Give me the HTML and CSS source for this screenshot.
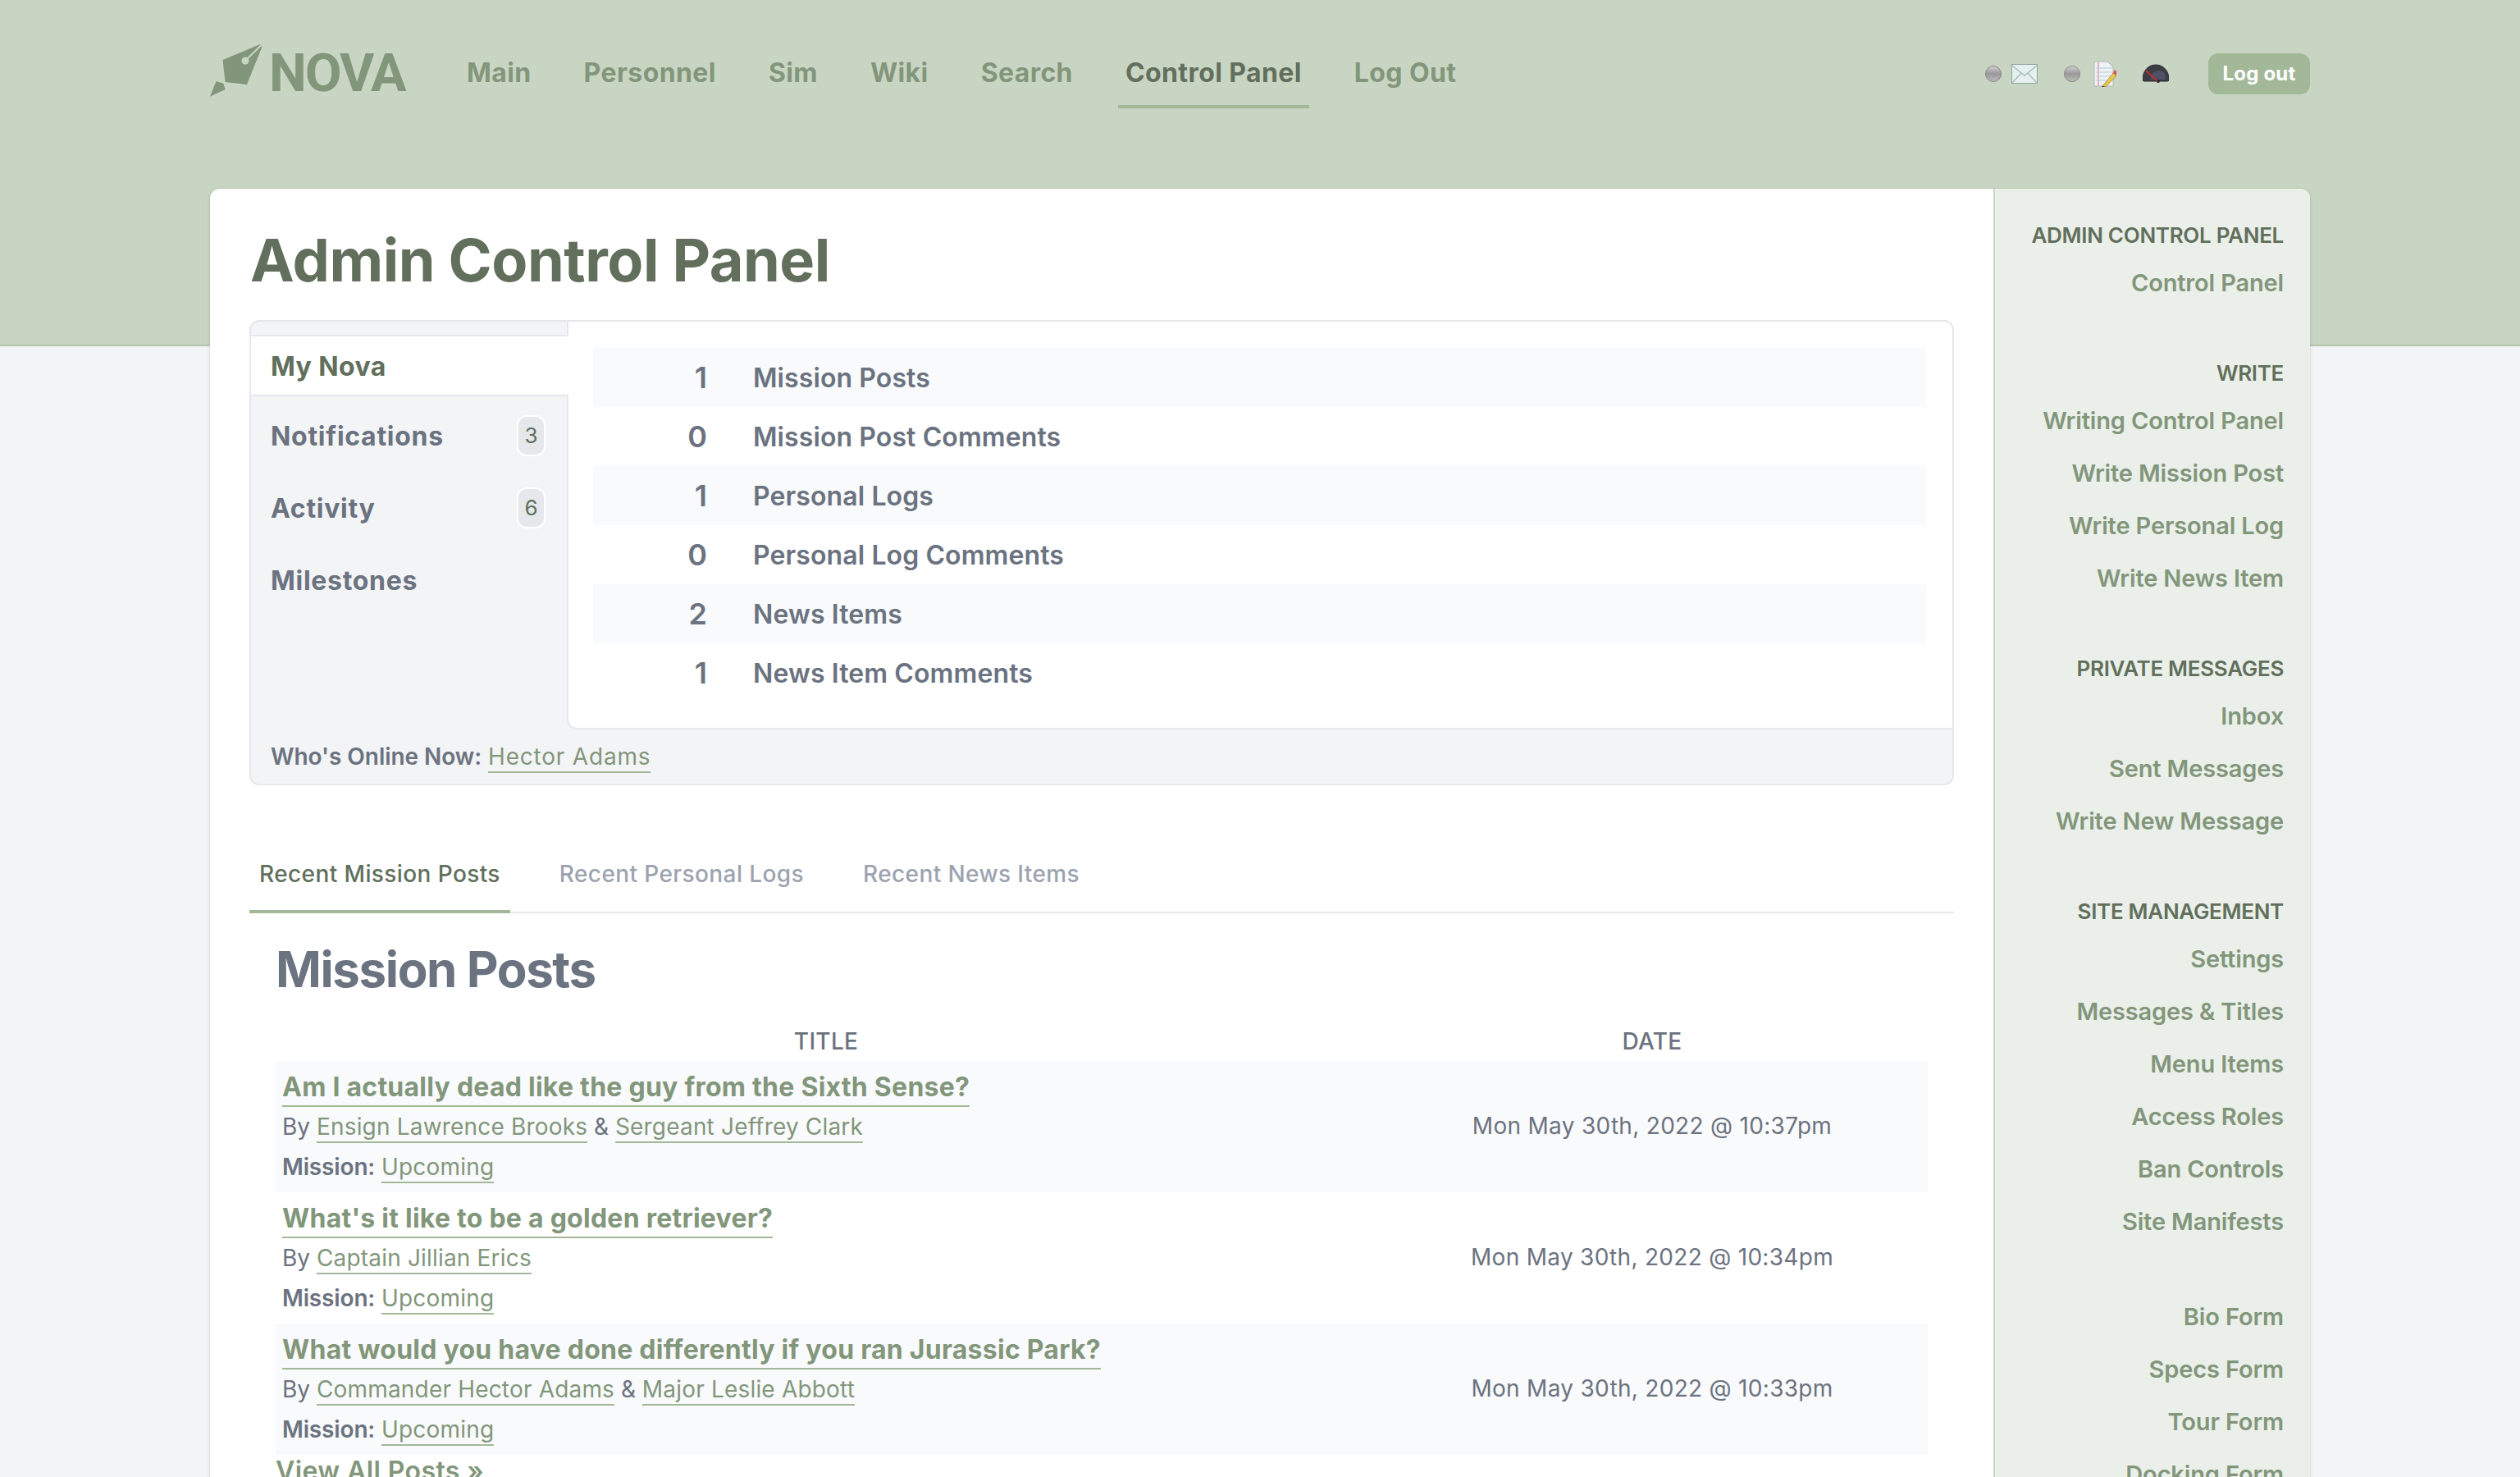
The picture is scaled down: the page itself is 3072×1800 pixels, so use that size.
FILE: index.html
```html
<!DOCTYPE html>
<html lang="en">
<head>
<meta charset="utf-8">
<title>Admin Control Panel</title>
<link rel="stylesheet" href="styles.css">
</head>
<body>
<div class="page">
  <header class="topbar">
    <a class="logo" href="#">
      <svg class="logo-mark" viewBox="26 28 64 64" width="64" height="64" aria-hidden="true">
        <path class="mark-fill" d="M87 28 41.5 47 44.6 74 71 77 89.5 31Z"/>
        <path class="mark-fill" d="M33.5 73 42.4 75.7 44.6 83 26 91.7Z"/>
        <path class="mark-slit" d="M70 47 89 28.5"/>
        <circle class="mark-hole" cx="69" cy="48" r="4.5"/>
      </svg>
      <span class="logo-text">NOVA</span>
    </a>
    <nav class="nav">
      <a href="#">Main</a>
      <a href="#">Personnel</a>
      <a href="#">Sim</a>
      <a href="#">Wiki</a>
      <a href="#">Search</a>
      <a href="#" class="active">Control Panel</a>
      <a href="#">Log Out</a>
    </nav>
    <div class="user">
      <div class="user-item">
        <svg class="dot" viewBox="0 0 20 20" width="20" height="20"><defs><linearGradient id="d1" x1="0" y1="0" x2="0" y2="1"><stop offset="0" stop-color="#d2d2d2"/><stop offset=".5" stop-color="#989898"/><stop offset="1" stop-color="#bdbdbd"/></linearGradient></defs><circle cx="10" cy="10" r="9.5" fill="url(#d1)" stroke="#858585"/></svg>
        <svg viewBox="0 0 32 24" width="32" height="24"><rect x=".5" y=".5" width="31" height="23" fill="#e6f0ee" stroke="#8fa79c"/><path d="M1 2 16 14 31 2M1 23 12 11M31 23 20 11" fill="none" stroke="#a9bdb5" stroke-width="1.4"/></svg>
      </div>
      <div class="user-item">
        <svg class="dot" viewBox="0 0 20 20" width="20" height="20"><circle cx="10" cy="10" r="9.5" fill="url(#d1)" stroke="#858585"/></svg>
        <svg class="note-icon" viewBox="0 0 28 32" width="28" height="32"><path d="M1 1H17L24 8V31H1Z" fill="#eef2f4" stroke="#a8b8b4"/><path d="M6 1V31" stroke="#e8b0b8" stroke-width="2"/><path d="M3 9H23M3 14H23M3 19H23M3 24H23" stroke="#b9cbe0"/><path d="M11 31 24 15 28 18 15 32Z" fill="#e8c64a" stroke="#8a7a2a" stroke-width=".6"/><path d="M24 15 26 11 28 13 28 18Z" fill="#d9534a"/><path d="M11 31 10 32H15Z" fill="#222"/></svg>
      </div>
      <div class="user-item">
        <svg viewBox="0 0 32 24" width="32" height="24"><path d="M0 19C0 8 7 1 16 1S32 8 32 19Q32 21 30 21H2Q0 21 0 19Z" fill="#3d3d44" stroke="#2b2b30"/><path d="M10 19C10 13 13 8 20 8S28 13 28 19Z" fill="#4f4f66"/><path d="M4 8 19 22" stroke="#b5302f" stroke-width="2"/><circle cx="19" cy="21" r="2" fill="#2b2b30"/></svg>
      </div>
      <a href="#" class="logout">Log out</a>
    </div>
  </header>

  <div class="card">
    <main class="content">
      <h1 class="page-title">Admin Control Panel</h1>

      <section class="panel">
        <div class="panel-body">
          <ul class="panel-tabs">
            <li class="panel-tab current"><a href="#">My Nova</a></li>
            <li class="panel-tab"><a href="#">Notifications</a><span class="badge">3</span></li>
            <li class="panel-tab"><a href="#">Activity</a><span class="badge">6</span></li>
            <li class="panel-tab"><a href="#">Milestones</a></li>
          </ul>
          <div class="panel-main">
            <div class="stat"><b>1</b><span>Mission Posts</span></div>
            <div class="stat"><b>0</b><span>Mission Post Comments</span></div>
            <div class="stat"><b>1</b><span>Personal Logs</span></div>
            <div class="stat"><b>0</b><span>Personal Log Comments</span></div>
            <div class="stat"><b>2</b><span>News Items</span></div>
            <div class="stat"><b>1</b><span>News Item Comments</span></div>
          </div>
        </div>
        <div class="online"><strong>Who's Online Now:</strong> <a href="#" class="ul-link">Hector Adams</a></div>
      </section>

      <div class="tabs">
        <a href="#" class="tab active">Recent Mission Posts</a>
        <a href="#" class="tab">Recent Personal Logs</a>
        <a href="#" class="tab">Recent News Items</a>
      </div>

      <section class="posts">
        <h2 class="posts-title">Mission Posts</h2>
        <table class="posts-table">
          <thead><tr><th class="col-title">Title</th><th class="col-date">Date</th></tr></thead>
          <tbody>
            <tr>
              <td>
                <a href="#" class="post-link">Am I actually dead like the guy from the Sixth Sense?</a>
                <div class="post-meta">By <a href="#" class="ul-link">Ensign Lawrence Brooks</a> &amp; <a href="#" class="ul-link">Sergeant Jeffrey Clark</a></div>
                <div class="post-meta"><strong>Mission:</strong> <a href="#" class="ul-link">Upcoming</a></div>
              </td>
              <td class="date">Mon May 30th, 2022 @ 10:37pm</td>
            </tr>
            <tr>
              <td>
                <a href="#" class="post-link">What's it like to be a golden retriever?</a>
                <div class="post-meta">By <a href="#" class="ul-link">Captain Jillian Erics</a></div>
                <div class="post-meta"><strong>Mission:</strong> <a href="#" class="ul-link">Upcoming</a></div>
              </td>
              <td class="date">Mon May 30th, 2022 @ 10:34pm</td>
            </tr>
            <tr>
              <td>
                <a href="#" class="post-link">What would you have done differently if you ran Jurassic Park?</a>
                <div class="post-meta">By <a href="#" class="ul-link">Commander Hector Adams</a> &amp; <a href="#" class="ul-link">Major Leslie Abbott</a></div>
                <div class="post-meta"><strong>Mission:</strong> <a href="#" class="ul-link">Upcoming</a></div>
              </td>
              <td class="date">Mon May 30th, 2022 @ 10:33pm</td>
            </tr>
          </tbody>
        </table>
        <a href="#" class="view-all">View All Posts »</a>
      </section>
    </main>

    <aside class="side">
      <div class="side-group">
        <h3>Admin Control Panel</h3>
        <a href="#">Control Panel</a>
      </div>
      <div class="side-group">
        <h3>Write</h3>
        <a href="#">Writing Control Panel</a>
        <a href="#">Write Mission Post</a>
        <a href="#">Write Personal Log</a>
        <a href="#">Write News Item</a>
      </div>
      <div class="side-group">
        <h3>Private Messages</h3>
        <a href="#">Inbox</a>
        <a href="#">Sent Messages</a>
        <a href="#">Write New Message</a>
      </div>
      <div class="side-group">
        <h3>Site Management</h3>
        <a href="#">Settings</a>
        <a href="#">Messages &amp; Titles</a>
        <a href="#">Menu Items</a>
        <a href="#">Access Roles</a>
        <a href="#">Ban Controls</a>
        <a href="#">Site Manifests</a>
      </div>
      <div class="side-group">
        <a href="#">Bio Form</a>
        <a href="#">Specs Form</a>
        <a href="#">Tour Form</a>
        <a href="#">Docking Form</a>
      </div>
    </aside>
  </div>
</div>
</body>
</html>
```

FILE: styles.css
```css
* { box-sizing: border-box; }
html, body { margin: 0; height: 1800px; overflow: hidden; }
body {
  font-family: Inter, "Liberation Sans", sans-serif;
  color: #6b7280;
  background: linear-gradient(#c9d5c3 0 420px, #b4c4ab 420px 422px, #f3f4f6 422px);
}
a { color: inherit; text-decoration: none; }
ul { list-style: none; margin: 0; padding: 0; }

.page { width: 2560px; margin: 0 auto; }

.topbar { display: flex; align-items: center; height: 176px; }
.logo { display: flex; align-items: center; width: 304px; gap: 8px; }
.logo-mark { flex: none; margin-top: -4px; }
.mark-fill { fill: #82967b; }
.mark-slit { stroke: #c9d5c3; stroke-width: 2; fill: none; }
.mark-hole { fill: #c9d5c3; }
.logo-text { font: 700 65px/1 Roboto, sans-serif; color: #82967b; letter-spacing: -2px; margin-top: 2px; }

.nav { display: flex; gap: 46px; height: 80px; align-self: flex-start; margin-top: 52px; }
.nav a {
  padding: 0 9px; height: 80px; line-height: 74px;
  font-size: 32px; font-weight: 700; color: #82967b; letter-spacing: .4px;
  border-bottom: 4px solid transparent;
}
.nav a.active { color: #616f5c; border-bottom-color: #a3b899; }

.user { margin-left: auto; display: flex; align-items: center; gap: 32px; padding-top: 4px; }
.user-item { display: flex; align-items: center; gap: 12px; }
.note-icon { margin-left: 4px; }
.logout {
  margin-left: 16px; width: 124px; height: 50px; line-height: 50px; text-align: center;
  background: #a3b899; color: #fff; border-radius: 12px; font-size: 24px; font-weight: 700; letter-spacing: .2px;
}

.card {
  margin-top: 54px; display: grid; grid-template-columns: 2174px 386px;
  border-radius: 12px; background: #fff; min-height: 1700px;
  box-shadow: 0 0 0 1px rgba(0,0,0,.04), 0 2px 6px rgba(0,0,0,.08);
}
.content { padding: 0 48px; min-width: 0; }
.page-title {
  margin: 0; height: 160px; padding: 40px 0 0 1px; line-height: 94px;
  font-size: 72px; font-weight: 700; letter-spacing: -.5px; color: #616f5c;
}

.panel { border: 2px solid #e5e7eb; border-radius: 12px; background: #f3f4f6; height: 567px; display: flex; flex-direction: column; }
.panel-body { display: grid; grid-template-columns: 385px 1fr; height: 497px; }
.panel-tabs { padding-top: 16px; }
.panel-tab { display: flex; align-items: center; justify-content: space-between; height: 88px; padding: 0 26px 0 24px; font-size: 32px; font-weight: 700; letter-spacing: .7px; }
.panel-tab.current { height: 75px; margin-bottom: 4px; margin-right: -2px; padding-top: 2px; position: relative; background: #fff; border-top: 2px solid #e5e7eb; border-bottom: 2px solid #e5e7eb; color: #616f5c; letter-spacing: .4px; }
.badge { width: 35px; height: 50px; line-height: 46px; text-align: center; background: #e5e7eb; border: 2px solid #fff; border-radius: 12px; font-size: 26px; font-weight: 400; letter-spacing: 0; color: #616f5c; }
.panel-main { background: #fff; border-left: 2px solid #e5e7eb; border-bottom: 2px solid #e5e7eb; border-radius: 0 10px 0 12px; padding: 32px 32px 0 30px; }
.stat { display: grid; grid-template-columns: 139px 1fr; column-gap: 56px; align-items: center; height: 72px; font-size: 32px; font-weight: 600; letter-spacing: .1px; }
.stat:nth-child(odd) { background: #f9fafb; }
.stat b { text-align: right; font-size: 36px; font-weight: 600; letter-spacing: 0; }
.online { padding-left: 24px; line-height: 66px; font-size: 28px; }
.online strong { font-weight: 600; letter-spacing: -.05px; }
.ul-link { color: #82967b; border-bottom: 2px solid #a3b899; padding-bottom: 1px; letter-spacing: .18px; }
.online .ul-link { letter-spacing: .8px; }

.tabs { margin-top: 62px; display: flex; gap: 48px; border-bottom: 2px solid #e5e7eb; height: 94px; }
.tab { height: 94px; padding: 0 12px; line-height: 92px; font-size: 28px; font-weight: 500; color: #9ca3af; letter-spacing: .4px; }
.tab.active { color: #616f5c; border-bottom: 4px solid #a3b899; }

.posts { padding: 0 32px; }
.posts-title { margin: 0; height: 120px; padding-top: 26px; line-height: 84px; font-size: 60px; font-weight: 700; letter-spacing: -1.4px; }
.posts-table { width: 100%; border-collapse: collapse; table-layout: fixed; }
.col-title { width: 1342px; }
.posts-table th { height: 60px; font-size: 28px; font-weight: 500; text-transform: uppercase; padding: 12px 0 0; letter-spacing: .3px; }
.posts-table td { height: 160px; padding: 10px 8px 0; vertical-align: top; }
.posts-table tbody tr:nth-child(odd) { background: #f9fafb; }
.post-link { display: inline-block; font-size: 32px; font-weight: 700; line-height: 44px; color: #82967b; border-bottom: 2px solid #a3b899; letter-spacing: .25px; }
.post-meta { font-size: 28px; line-height: 49px; height: 49px; color: #6b7280; }
.post-meta strong { font-weight: 600; letter-spacing: -.15px; }
.posts-table .date { vertical-align: middle; text-align: center; font-size: 28px; padding: 0 0 2px; letter-spacing: .3px; }
.view-all { display: block; font-size: 32px; font-weight: 600; color: #82967b; line-height: 40px; letter-spacing: .4px; }

.side { background: #eaefe9; border-left: 2px solid #c9d5c3; border-radius: 0 12px 0 0; padding: 31px 32px 0 0; text-align: right; }
.side-group { margin-bottom: 52px; }
.side-group h3 { margin: 0; height: 52px; line-height: 52px; font-size: 26px; font-weight: 600; text-transform: uppercase; color: #616f5c; letter-spacing: -.3px; }
.side-group a { display: block; height: 64px; line-height: 64px; font-size: 29px; font-weight: 600; color: #82967b; letter-spacing: -.15px; }
```
